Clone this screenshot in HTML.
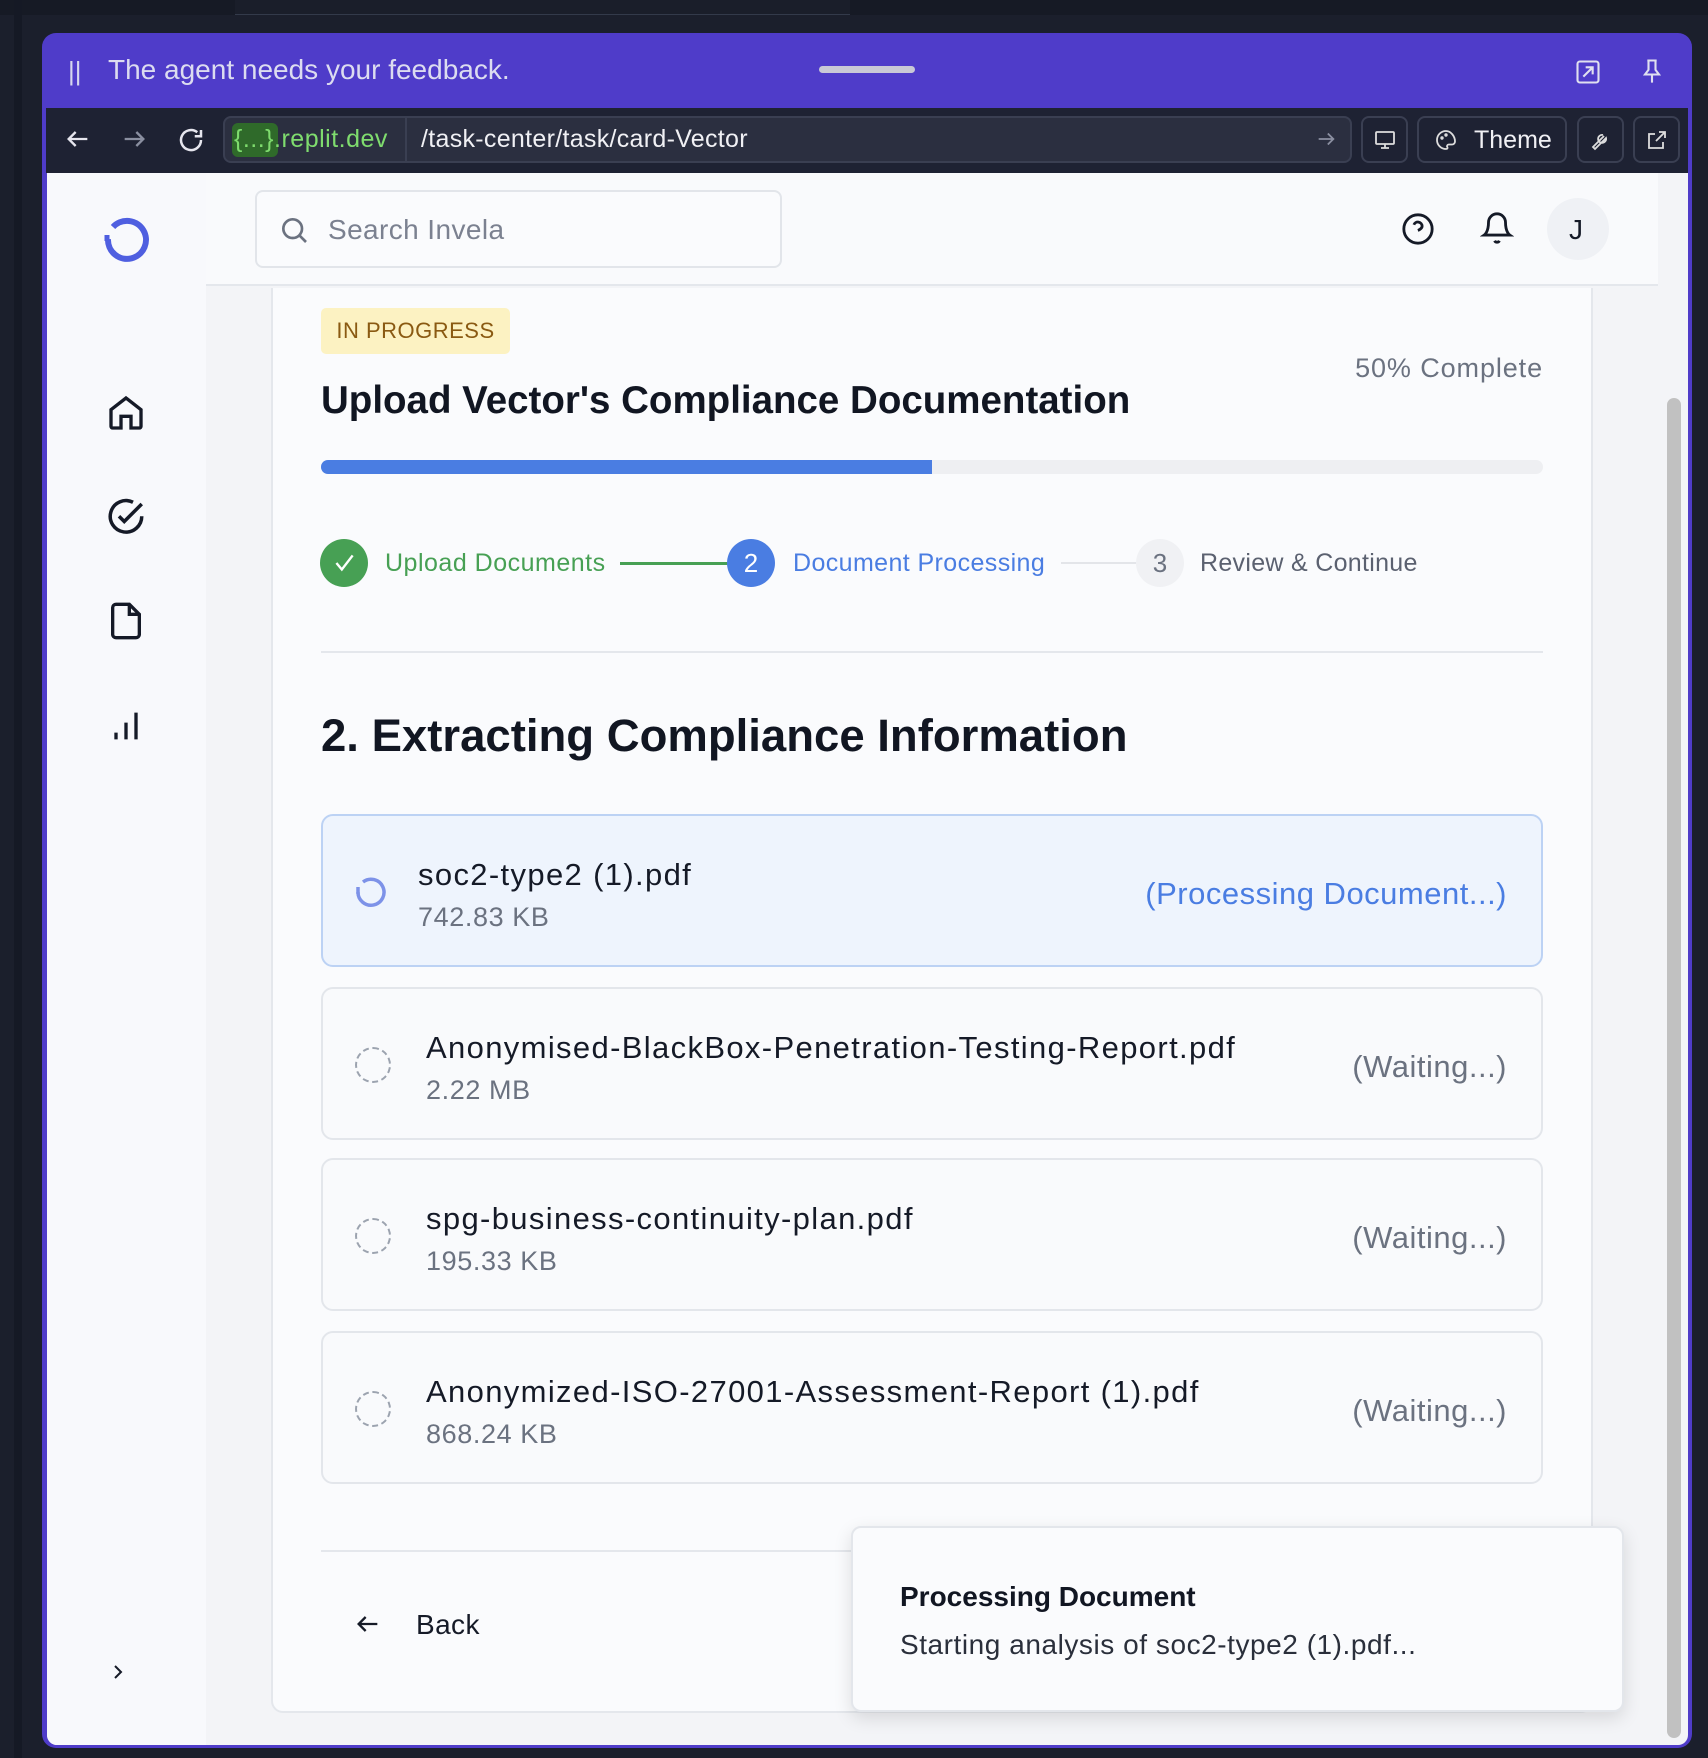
<!DOCTYPE html>
<html><head><meta charset="utf-8"><style>
*{box-sizing:border-box;margin:0;padding:0}
body{width:1708px;height:1758px;background:#1b1f2c;font-family:"Liberation Sans",sans-serif;position:relative;overflow:hidden}
.a{position:absolute}
.t{white-space:nowrap;line-height:1}
.card{position:absolute;left:321px;width:1222px;height:153px;border:2px solid #e3e6eb;border-radius:12px;background:#f9fafc}
.fn{position:absolute;font-size:31px;color:#151a27;white-space:nowrap;line-height:1;letter-spacing:1.35px}
.fs{position:absolute;font-size:27px;color:#6b7280;white-space:nowrap;line-height:1;letter-spacing:0.6px}
.st{position:absolute;right:34px;top:62px;font-size:31px;color:#6b7280;line-height:1;letter-spacing:0.5px}
.sp{position:absolute;left:32px;top:58px;width:36px;height:36px;border:2.5px dashed #9ca3af;border-radius:50%}
</style></head><body>
<div class="a" style="left:0;top:0;width:1708px;height:15px;background:#161a25"></div>
<div class="a" style="left:235px;top:0;width:615px;height:15px;background:#1a1e2a;border-bottom:1px solid #333a4a"></div>
<div class="a" style="left:14px;top:0;width:8px;height:1758px;background:#151925"></div>
<div class="a" style="left:42px;top:33px;width:1650px;height:1715px;background:#4f3cc9;border-radius:14px"></div>
<div class="a t" style="left:68px;top:58px;font-size:26px;color:#d6d6ee">||</div>
<div class="a t" style="left:108px;top:56px;font-size:28px;color:#dcdcf0">The agent needs your feedback.</div>
<div class="a" style="left:819px;top:66px;width:96px;height:7px;border-radius:4px;background:#c9c9d6"></div>
<svg class="a" style="left:1574px;top:58px" width="28" height="28" viewBox="0 0 24 24" fill="none" stroke="#e0e0f0" stroke-width="1.8"><rect x="3" y="3" width="18" height="18" rx="2"/><path d="M8 16L16 8M10 8h6v6"/></svg>
<svg class="a" style="left:1638px;top:56px" width="28" height="30" viewBox="0 0 24 24" fill="none" stroke="#e0e0f0" stroke-width="1.8"><path d="M8 3h8M9 3v8l-3 4h12l-3-4V3M12 15v7"/></svg>
<div class="a" style="left:46px;top:108px;width:1642px;height:65px;background:#1e2233"></div>
<svg class="a" style="left:64px;top:125px" width="28" height="28" viewBox="0 0 24 24" fill="none" stroke="#e6e6ee" stroke-width="2"><path d="M20 12H4M10 6l-6 6 6 6"/></svg>
<svg class="a" style="left:120px;top:125px" width="28" height="28" viewBox="0 0 24 24" fill="none" stroke="#8a8fa0" stroke-width="2"><path d="M4 12h16M14 6l6 6-6 6"/></svg>
<svg class="a" style="left:176px;top:125px" width="30" height="30" viewBox="0 0 24 24" fill="none" stroke="#e6e6ee" stroke-width="2"><path d="M20 12a8 8 0 1 1-3-6.2M20 4v5h-5"/></svg>
<div class="a" style="left:223px;top:116px;width:1129px;height:47px;border:2px solid #3a3f52;border-radius:8px;background:#2b2f40"></div>
<div class="a" style="left:405px;top:118px;width:2px;height:43px;background:#3a3f52"></div>
<div class="a" style="left:232px;top:123px;width:46px;height:34px;background:#2f6a2a;border-radius:6px"></div>
<div class="a t" style="left:234px;top:127px;font-size:25px;color:#7fdc6e;letter-spacing:0.5px">{...}.replit.dev</div>
<div class="a t" style="left:421px;top:127px;font-size:25px;color:#f0f0f4;letter-spacing:0.3px">/task-center/task/card-Vector</div>
<svg class="a" style="left:1315px;top:128px" width="22" height="22" viewBox="0 0 24 24" fill="none" stroke="#8a8fa0" stroke-width="2"><path d="M4 12h16M14 6l6 6-6 6"/></svg>
<div class="a" style="left:1361px;top:116px;width:47px;height:47px;border:2px solid #3a3f52;border-radius:8px"></div>
<svg class="a" style="left:1373px;top:128px" width="24" height="24" viewBox="0 0 24 24" fill="none" stroke="#ddd" stroke-width="1.8"><rect x="3" y="4" width="18" height="12" rx="1"/><path d="M12 16v4M8 20h8"/></svg>
<div class="a" style="left:1417px;top:116px;width:150px;height:47px;border:2px solid #3a3f52;border-radius:8px"></div>
<svg class="a" style="left:1434px;top:128px" width="24" height="24" viewBox="0 0 24 24" fill="none" stroke="#ddd" stroke-width="1.8"><path d="M12 3a9 9 0 1 0 0 18c1.5 0 2-1 1.3-2-.7-1 0-2.5 1.5-2.5H18a3 3 0 0 0 3-3c0-5-4-10.5-9-10.5z"/><circle cx="8" cy="10" r="0.8"/><circle cx="12" cy="7" r="0.8"/></svg>
<div class="a t" style="left:1474px;top:128px;font-size:25px;color:#f0f0f4">Theme</div>
<div class="a" style="left:1577px;top:116px;width:47px;height:47px;border:2px solid #3a3f52;border-radius:8px"></div>
<svg class="a" style="left:1589px;top:128px" width="24" height="24" viewBox="0 0 24 24" fill="none" stroke="#ddd" stroke-width="1.8"><path d="M14 7a4 4 0 1 0 3 3l-11 11-2-2L15 8"/></svg>
<div class="a" style="left:1633px;top:116px;width:47px;height:47px;border:2px solid #3a3f52;border-radius:8px"></div>
<svg class="a" style="left:1645px;top:128px" width="24" height="24" viewBox="0 0 24 24" fill="none" stroke="#ddd" stroke-width="1.8"><path d="M14 4h6v6M20 4l-9 9M18 14v6H4V6h6"/></svg>
<div class="a" style="left:47px;top:173px;width:1641px;height:1572px;background:#f3f4f7;border-radius:0 0 10px 10px"></div>
<div class="a" style="left:47px;top:173px;width:159px;height:1572px;background:#f8f9fc;border-radius:0 0 0 10px"></div>
<div class="a" style="left:206px;top:173px;width:1452px;height:113px;background:#f9fafc;border-bottom:2px solid #e4e7ec"></div>
<svg class="a" style="left:101px;top:211px" width="52" height="52" viewBox="0 0 52 52" fill="none" stroke="#4f5fe0" stroke-width="6"><path d="M12 16A19 19 0 1 1 7 28"/><path d="M6 24v6" stroke-width="5"/></svg>
<svg class="a" style="left:106px;top:393px" width="40" height="40" viewBox="0 0 24 24" fill="none" stroke="#151a27" stroke-width="2"><path d="M3 10l9-7 9 7v10a1 1 0 0 1-1 1h-5v-7H9v7H4a1 1 0 0 1-1-1z"/></svg>
<svg class="a" style="left:105px;top:497px" width="42" height="42" viewBox="0 0 24 24" fill="none" stroke="#151a27" stroke-width="2"><path d="M21 11a9 9 0 1 1-5-8"/><path d="M8 11l3 3 10-10"/></svg>
<svg class="a" style="left:106px;top:601px" width="40" height="40" viewBox="0 0 24 24" fill="none" stroke="#151a27" stroke-width="2"><path d="M14 2H6a2 2 0 0 0-2 2v16a2 2 0 0 0 2 2h12a2 2 0 0 0 2-2V8z"/><path d="M14 2v6h6"/></svg>
<svg class="a" style="left:106px;top:706px" width="40" height="40" viewBox="0 0 24 24" fill="none" stroke="#151a27" stroke-width="2"><path d="M6 20v-4M12 20V10M18 20V4"/></svg>
<svg class="a" style="left:106px;top:1660px" width="24" height="24" viewBox="0 0 24 24" fill="none" stroke="#151a27" stroke-width="2"><path d="M9 6l6 6-6 6"/></svg>
<div class="a" style="left:255px;top:190px;width:527px;height:78px;border:2px solid #e2e5ea;border-radius:8px;background:#fafbfd"></div>
<svg class="a" style="left:278px;top:214px" width="32" height="32" viewBox="0 0 24 24" fill="none" stroke="#6b7280" stroke-width="2"><circle cx="11" cy="11" r="7"/><path d="M21 21l-5-5"/></svg>
<div class="a t" style="left:328px;top:216px;font-size:28px;color:#7b8190;letter-spacing:0.4px">Search Invela</div>
<svg class="a" style="left:1401px;top:212px" width="34" height="34" viewBox="0 0 24 24" fill="none" stroke="#151a27" stroke-width="2"><circle cx="12" cy="12" r="10"/><path d="M9.1 9a3 3 0 0 1 5.8 1c0 2-3 3-3 3M12 17h.01"/></svg>
<svg class="a" style="left:1480px;top:211px" width="34" height="34" viewBox="0 0 24 24" fill="none" stroke="#151a27" stroke-width="2"><path d="M6 8a6 6 0 0 1 12 0c0 7 3 9 3 9H3s3-2 3-9M10.3 21a1.9 1.9 0 0 0 3.4 0"/></svg>
<div class="a" style="left:1547px;top:198px;width:62px;height:62px;border-radius:50%;background:#eff1f5"></div>
<div class="a t" style="left:1569px;top:216px;font-size:28px;color:#151a27">J</div>
<div class="a" style="left:271px;top:288px;width:1322px;height:1425px;background:#fafbfd;border:2px solid #e4e7ec;border-top:none;border-radius:0 0 12px 12px"></div>
<div class="a t" style="left:321px;top:308px;width:189px;height:46px;background:#fcf2c2;border-radius:5px;font-size:22px;color:#8a5a12;padding-top:12px;text-align:center;letter-spacing:0.5px">IN PROGRESS</div>
<div class="a t" style="left:321px;top:382px;font-size:38.5px;font-weight:bold;color:#111622">Upload Vector's Compliance Documentation</div>
<div class="a t" style="right:165px;top:355px;font-size:27px;color:#6b7280;letter-spacing:0.9px">50% Complete</div>
<div class="a" style="left:321px;top:460px;width:1222px;height:14px;border-radius:7px;background:#eeeff2"></div>
<div class="a" style="left:321px;top:460px;width:611px;height:14px;border-radius:7px 0 0 7px;background:#4a7de2"></div>
<div class="a" style="left:320px;top:539px;width:48px;height:48px;border-radius:50%;background:#47a054"></div>
<svg class="a" style="left:331px;top:550px" width="26" height="26" viewBox="0 0 24 24" fill="none" stroke="#fff" stroke-width="2.2"><path d="M5 12l5 6L20 5"/></svg>
<div class="a t" style="left:385px;top:551px;font-size:25px;color:#47a054;letter-spacing:0.5px">Upload Documents</div>
<div class="a" style="left:620px;top:562px;width:108px;height:3px;background:#47a054"></div>
<div class="a t" style="left:727px;top:539px;width:48px;height:48px;border-radius:50%;background:#4a7de2;color:#fff;font-size:26px;text-align:center;padding-top:11px">2</div>
<div class="a t" style="left:793px;top:551px;font-size:25px;color:#4a7de2;letter-spacing:0.4px">Document Processing</div>
<div class="a" style="left:1061px;top:562px;width:75px;height:2px;background:#e3e5e9"></div>
<div class="a t" style="left:1136px;top:539px;width:48px;height:48px;border-radius:50%;background:#f0f1f4;color:#6b7280;font-size:26px;text-align:center;padding-top:11px">3</div>
<div class="a t" style="left:1200px;top:551px;font-size:25px;color:#5b6170;letter-spacing:0.3px">Review &amp; Continue</div>
<div class="a" style="left:321px;top:651px;width:1222px;height:2px;background:#e4e7ec"></div>
<div class="a t" style="left:321px;top:713px;font-size:45.5px;font-weight:bold;color:#111622">2. Extracting Compliance Information</div>
<div class="card" style="top:814px;background:#eef4fd;border-color:#bcd2f4">
  <svg class="a" style="left:30px;top:58px" width="36" height="36" viewBox="0 0 36 36" fill="none" stroke="#7d92e8" stroke-width="3.5"><path d="M10 8A13 13 0 1 1 5 18"/><path d="M5 13v7"/></svg>
  <div class="fn" style="left:95px;top:43px">soc2-type2 (1).pdf</div>
  <div class="fs" style="left:95px;top:88px">742.83 KB</div>
  <div class="st" style="color:#4a7de2">(Processing Document...)</div>
</div>
<div class="card" style="top:987px"><div class="sp"></div><div class="fn" style="left:103px;top:43px">Anonymised-BlackBox-Penetration-Testing-Report.pdf</div><div class="fs" style="left:103px;top:88px">2.22 MB</div><div class="st">(Waiting...)</div></div>
<div class="card" style="top:1158px"><div class="sp"></div><div class="fn" style="left:103px;top:43px">spg-business-continuity-plan.pdf</div><div class="fs" style="left:103px;top:88px">195.33 KB</div><div class="st">(Waiting...)</div></div>
<div class="card" style="top:1331px"><div class="sp"></div><div class="fn" style="left:103px;top:43px">Anonymized-ISO-27001-Assessment-Report (1).pdf</div><div class="fs" style="left:103px;top:88px">868.24 KB</div><div class="st">(Waiting...)</div></div>
<div class="a" style="left:321px;top:1550px;width:1222px;height:2px;background:#e4e7ec"></div>
<svg class="a" style="left:354px;top:1610px" width="28" height="28" viewBox="0 0 24 24" fill="none" stroke="#151a27" stroke-width="2"><path d="M20 12H4M10 6l-6 6 6 6"/></svg>
<div class="a t" style="left:416px;top:1611px;font-size:28px;color:#151a27;letter-spacing:0.4px">Back</div>
<div class="a" style="left:851px;top:1526px;width:773px;height:186px;background:#fafbfd;border:2px solid #e3e6eb;border-radius:10px;box-shadow:0 6px 18px rgba(0,0,0,0.12)"></div>
<div class="a t" style="left:900px;top:1583px;font-size:28px;font-weight:bold;color:#111622">Processing Document</div>
<div class="a t" style="left:900px;top:1631px;font-size:28px;color:#2a2f3b;letter-spacing:0.55px">Starting analysis of soc2-type2 (1).pdf...</div>
<div class="a" style="left:1667px;top:398px;width:14px;height:1340px;border-radius:7px;background:#c1c1c1"></div>
</body></html>
